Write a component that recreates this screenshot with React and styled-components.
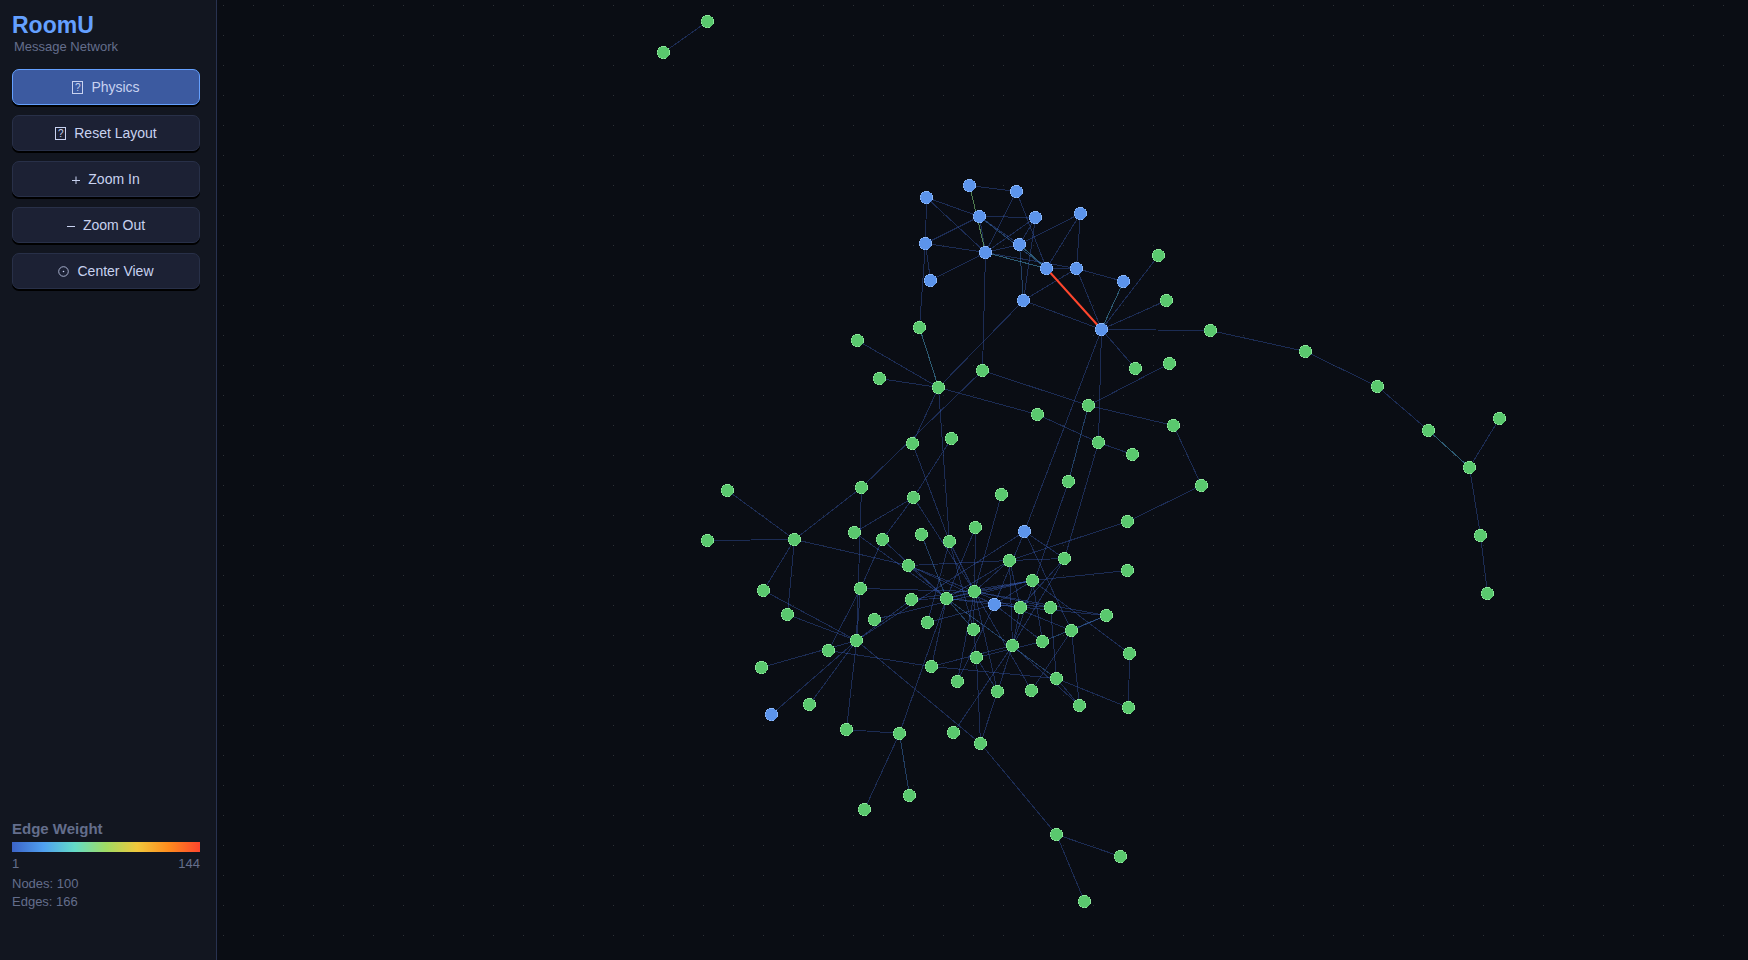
import React, { useState } from "react";
import styled, { createGlobalStyle } from "styled-components";

const GlobalStyle = createGlobalStyle`
  *, *::before, *::after { box-sizing: border-box; }
  body {
    margin: 0;
    background: #0a0d14;
    font-family: "Liberation Sans", Arial, Helvetica, sans-serif;
  }
`;

const Page = styled.div`
  display: flex;
  min-height: 100vh;
`;

const Sidebar = styled.aside`
  flex: 0 0 217px;
  display: flex;
  flex-direction: column;
  justify-content: space-between;
  padding: 12px 16px 49px 12px;
  background: #121620;
  border-right: 1px solid #283250;
`;

const Title = styled.h1`
  margin: 0;
  font-size: 23px;
  line-height: 26px;
  color: #64a0ff;
`;

const Subtitle = styled.p`
  margin: 0 0 13px;
  padding-left: 2px;
  font-size: 13px;
  line-height: 18px;
  color: #646e8c;
`;

const Controls = styled.div`
  display: flex;
  flex-direction: column;
  gap: 10px;
`;

const ControlButton = styled.button`
  display: flex;
  align-items: center;
  justify-content: center;
  gap: 8px;
  height: 36px;
  padding: 0;
  border: 1px solid ${(p) => (p.$active ? "#64a0ff" : "#283048")};
  border-radius: 7px;
  background: ${(p) => (p.$active ? "#3c5aa0" : "#1c2134")};
  box-shadow: 0 2px 0 #000000;
  color: #c8d2f0;
  font-family: inherit;
  font-size: 14px;
  line-height: 16px;
  cursor: pointer;
`;

const BoxMark = styled.span`
  width: 11px;
  height: 13px;
  border: 1px solid currentColor;
  font-size: 10px;
  line-height: 11px;
  text-align: center;
`;

const Legend = styled.section`
  color: #646e8c;
  font-size: 13px;
  line-height: 18px;
`;

const LegendTitle = styled.h2`
  margin: 0 0 4px;
  font-size: 15px;
  line-height: 18px;
`;

const WeightBar = styled.div`
  height: 10px;
  background: linear-gradient(
    to right,
    #3c64c8, #50a0f0, #64dcc8, #a0dc64, #f0c83c, #ff8c1e, #ff462d
  );
`;

const Scale = styled.div`
  display: flex;
  justify-content: space-between;
  margin: 3px 0 2px;
`;

const Stat = styled.p`
  margin: 0;
`;

const Stage = styled.main`
  flex: 1;
  min-width: 0;
  display: flex;
  background: #0a0d14;
`;

const Graph = styled.svg`
  flex: 1;
  min-width: 0;
  display: block;
`;

/* Node positions on the canvas; ids starting with "b" are blue, "g" green. */
const NODES = {
  b1: [926, 197], b2: [969, 185], b3: [1016, 191], b4: [979, 216], b5: [1035, 217],
  b6: [1080, 213], b7: [925, 243], b8: [985, 252], b9: [1019, 244], b10: [1046, 268],
  b11: [1076, 268], b12: [1123, 281], b13: [930, 280], b14: [1023, 300], b15: [1101, 329],
  b16: [771, 714], b17: [1024, 531], b18: [994, 604],
  g1: [1158, 255], g2: [1166, 300], g3: [1210, 330], g4: [919, 327], g5: [857, 340],
  g6: [879, 378], g7: [938, 387], g8: [982, 370], g9: [1135, 368], g10: [1169, 363],
  g11: [1088, 405], g12: [1037, 414], g13: [1173, 425], g14: [1098, 442], g15: [1132, 454],
  g16: [912, 443], g17: [951, 438], g18: [861, 487], g19: [913, 497], g20: [1001, 494],
  g21: [1068, 481], g22: [1201, 485], g23: [727, 490], g24: [707, 540], g25: [794, 539],
  g26: [854, 532], g27: [882, 539], g28: [921, 534], g29: [949, 541], g30: [908, 565],
  g31: [763, 590], g32: [787, 614], g33: [860, 588], g34: [911, 599], g35: [946, 598],
  g36: [874, 619], g37: [927, 622], g38: [856, 640], g39: [828, 650], g40: [761, 667],
  g41: [931, 666], g42: [809, 704], g43: [846, 729], g44: [899, 733], g45: [975, 527],
  g46: [1127, 521], g47: [1009, 560], g48: [1064, 558], g49: [1127, 570], g50: [1032, 580],
  g51: [974, 591], g52: [1020, 607], g53: [1050, 607], g54: [1106, 615], g55: [973, 629],
  g56: [1012, 645], g57: [1042, 641], g58: [1071, 630], g59: [1129, 653], g60: [976, 657],
  g61: [957, 681], g62: [997, 691], g63: [1031, 690], g64: [1056, 678], g65: [1079, 705],
  g66: [1128, 707], g67: [953, 732], g68: [980, 743], g69: [864, 809], g70: [909, 795],
  g71: [1056, 834], g72: [1120, 856], g73: [1084, 901], g74: [1305, 351], g75: [1377, 386],
  g76: [1428, 430], g77: [1499, 418], g78: [1469, 467], g79: [1480, 535], g80: [1487, 593],
  g81: [663, 52], g82: [707, 21],
};

/* Adjacency by weight class: "from: to to to". */
const EDGES = {
  low: `
    b1: b7 b4 b8
    b2: b3
    b3: b8 b10
    b4: b8 b5 b7 b9
    b5: b8 b9 b14
    b6: b9 b10 b11
    b7: b8 b13 g4
    b8: b9 b11 b13 g8
    b10: b11
    b11: b12 b14 b15
    b14: b15 g7
    b15: g1 g2 g3 g9 b17 g14
    b17: g48 g38 g58 b18
    g7: g5 g6 g12 g16 g29
    g8: g11 g18
    g11: g10 g13
    g14: g12 g15 g48
    g22: g13 g46
    g16: g29
    g19: g17 g26 g27 g51
    g18: g25 g38
    g25: g23 g24 g30 g31 g32
    g35: g26 g27 g30 g34 g41 g44 g45 g47 g50 g51 g53 b18
    g33: g27 g38 g39 g51
    g30: g47 g51 b18
    g38: g31 g32 g34 g40 b16 g42 g43 g68
    g50: g34 g36 g49 g51 b18 g57 g59
    g37: g29 b18
    g39: g41
    g41: g56 g64
    g43: g44
    g44: g69
    g29: g51 g55
    g51: g45 g20 g47 g54 g53 g58 g55 g62 g63 g61
    g21: g56
    g47: g46 g48 g52 g56
    g48: g52 g56
    b18: g52 g54 g57 g61
    g52: g56
    g54: g58
    g53: g64
    g58: g63 g65
    g56: g62 g65 g67
    g60: g55 g57 g62 g68
    g62: g68
    g64: g65 g66
    g59: g66
    g68: g71
    g71: g72 g73
    g3: g74
    g74: g75
    g75: g76
    g78: g77 g79
    g79: g80
    g81: g82`,
  mild: `
    b4: b10
    b9: b14
    g11: g21
    g44: g70
    g28: g35
    g35: g55 g64
    g54: g57`,
  medium: `
    b8: b10
    b9: b10
    b12: b15
    g4: g7
    g76: g78`,
  high: `
    b2: b8`,
  top: `
    b10: b15`,
};

const EDGE_STYLES = {
  low: { stroke: "#3c64c8", strokeOpacity: 0.36 },
  mild: { stroke: "#4682d2", strokeOpacity: 0.42 },
  medium: { stroke: "#50aad2", strokeOpacity: 0.5 },
  high: { stroke: "#8cdc82", strokeOpacity: 0.55 },
  top: { stroke: "#ff462d", strokeWidth: 2, shapeRendering: "geometricPrecision" },
};

const parseEdges = (text) =>
  text.trim().split("\n").flatMap((line) => {
    const [from, targets] = line.trim().split(": ");
    return targets.split(" ").map((to) => [from, to]);
  });

const NODE_COLORS = {
  b: { fill: "#5c94eb", rim: "#8cb8fa" },
  g: { fill: "#5ac86e", rim: "#8ce69b" },
};

const SIDEBAR_WIDTH = 217;

function NetworkGraph() {
  return (
    <Graph role="img" aria-label="Message network graph" shapeRendering="crispEdges">
      <defs>
        <pattern id="grid" width="30" height="30" patternUnits="userSpaceOnUse">
          <rect x="6" y="5" width="1" height="1" fill="#2d3138" />
        </pattern>
      </defs>
      <rect width="100%" height="100%" fill="url(#grid)" />
      <g transform={`translate(${0.5 - SIDEBAR_WIDTH} 0.5)`}>
        {Object.entries(EDGES).map(([weight, text]) => (
          <g key={weight} strokeWidth="1" {...EDGE_STYLES[weight]}>
            {parseEdges(text).map(([a, b]) => (
              <line key={a + b} x1={NODES[a][0]} y1={NODES[a][1]} x2={NODES[b][0]} y2={NODES[b][1]} />
            ))}
          </g>
        ))}
        {Object.entries(NODES).map(([id, [x, y]]) => (
          <g key={id}>
            <circle cx={x} cy={y} r="6.5" fill={NODE_COLORS[id[0]].rim} />
            <circle cx={x} cy={y} r="6" fill={NODE_COLORS[id[0]].fill} />
          </g>
        ))}
      </g>
    </Graph>
  );
}

const PlusIcon = () => (
  <svg width="8" height="10" viewBox="0 0 8 10" stroke="currentColor" aria-hidden="true">
    <path d="M0 6.5H8M4 2.5V10" fill="none" strokeWidth="1" />
  </svg>
);

const MinusIcon = () => (
  <svg width="8" height="10" viewBox="0 0 8 10" stroke="currentColor" aria-hidden="true">
    <path d="M0 6.5H8" fill="none" strokeWidth="1" />
  </svg>
);

const TargetIcon = () => (
  <svg width="11" height="11" viewBox="0 0 11 11" aria-hidden="true">
    <circle cx="5.5" cy="5.5" r="4.8" fill="none" stroke="currentColor" strokeWidth="0.8" />
    <circle cx="5.5" cy="5.5" r="0.8" fill="currentColor" />
  </svg>
);

export default function App() {
  const [physics, setPhysics] = useState(true);
  return (
    <>
      <GlobalStyle />
      <Page>
        <Sidebar>
          <div>
            <Title>RoomU</Title>
            <Subtitle>Message Network</Subtitle>
            <Controls>
              <ControlButton
                type="button"
                $active={physics}
                aria-pressed={physics}
                onClick={() => setPhysics(!physics)}
              >
                <BoxMark aria-hidden="true">?</BoxMark>
                Physics
              </ControlButton>
              <ControlButton type="button">
                <BoxMark aria-hidden="true">?</BoxMark>
                Reset Layout
              </ControlButton>
              <ControlButton type="button">
                <PlusIcon />
                Zoom In
              </ControlButton>
              <ControlButton type="button">
                <MinusIcon />
                Zoom Out
              </ControlButton>
              <ControlButton type="button">
                <TargetIcon />
                Center View
              </ControlButton>
            </Controls>
          </div>
          <Legend>
            <LegendTitle>Edge Weight</LegendTitle>
            <WeightBar />
            <Scale>
              <span>1</span>
              <span>144</span>
            </Scale>
            <Stat>Nodes: 100</Stat>
            <Stat>Edges: 166</Stat>
          </Legend>
        </Sidebar>
        <Stage>
          <NetworkGraph />
        </Stage>
      </Page>
    </>
  );
}
